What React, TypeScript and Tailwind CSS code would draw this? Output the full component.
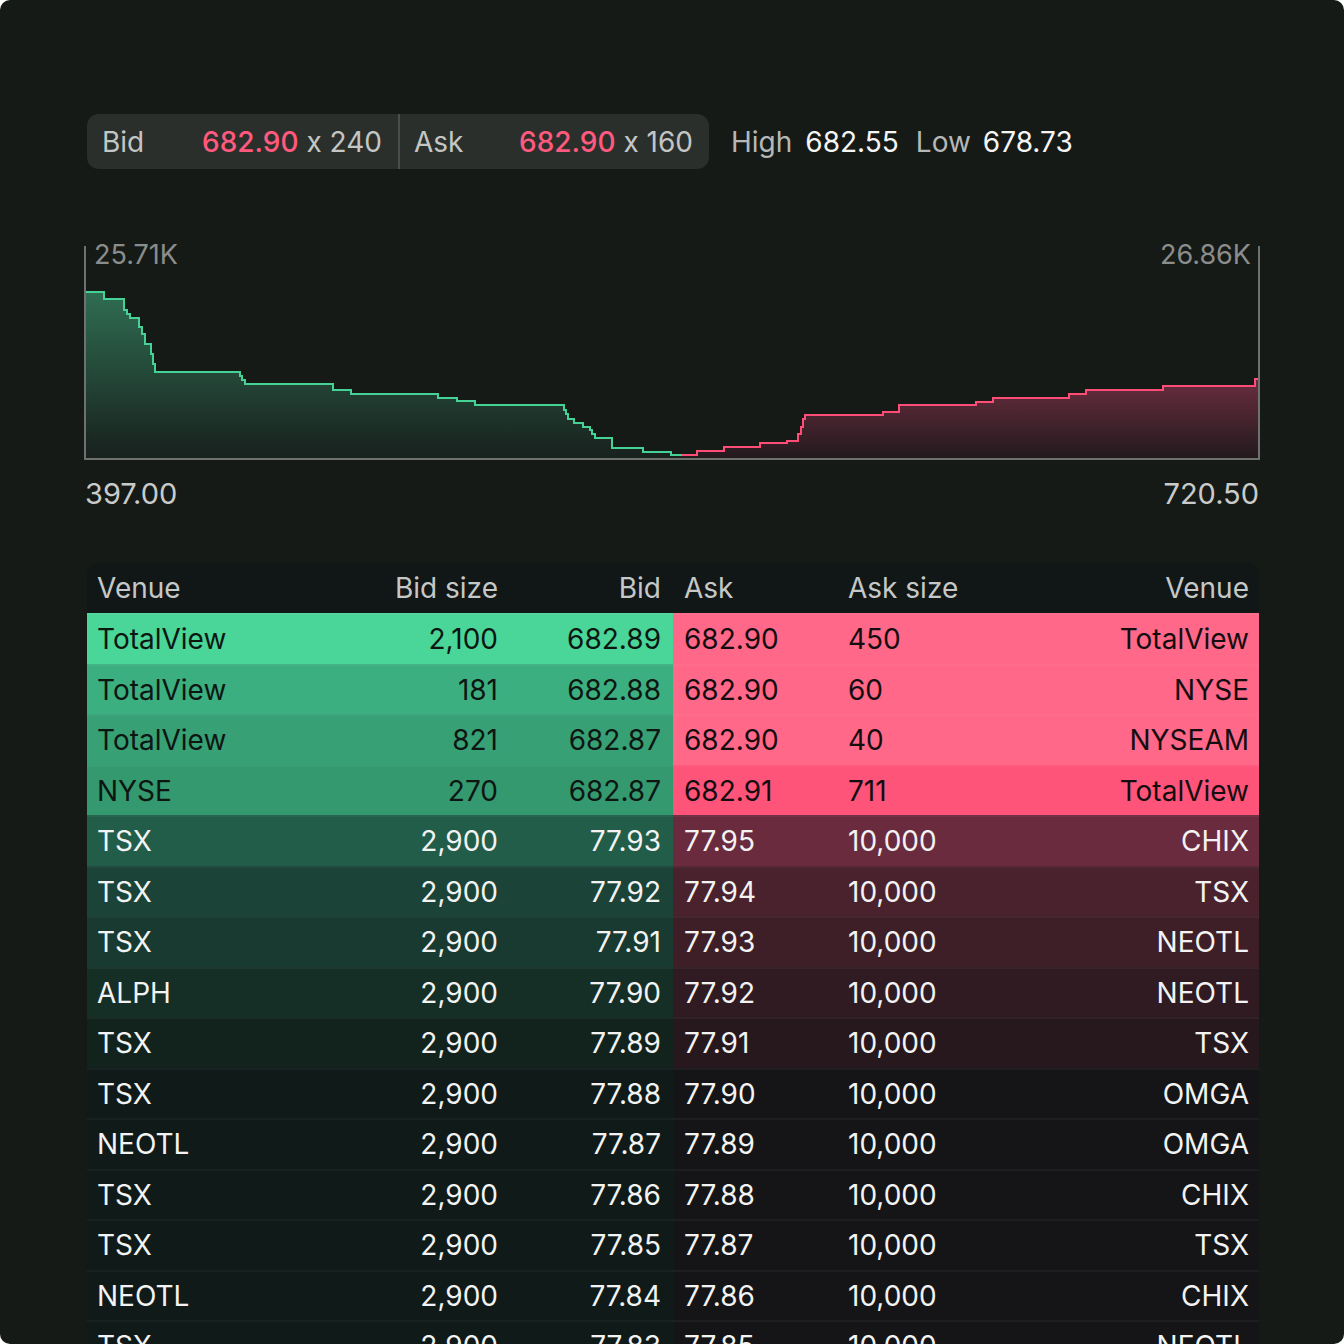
import React from 'react'

// step points in page coordinates (svg viewBox is offset to match)
const BID_PTS: [number, number][] = [
  [85, 292], [104, 292], [104, 299], [124, 299], [124, 310], [127, 310], [127, 314], [130, 314], [130, 318],
  [139, 318], [139, 327], [142, 327], [142, 334], [145, 334], [145, 344], [151, 344], [151, 354], [153, 354],
  [153, 364], [155, 364], [155, 372], [240, 372], [240, 376], [242, 376], [242, 380], [245, 380], [245, 384],
  [333, 384], [333, 390], [351, 390], [351, 394], [438, 394], [438, 398], [457, 398], [457, 401], [475, 401],
  [475, 405], [564, 405], [564, 410], [566, 410], [566, 414], [568, 414], [568, 419], [574, 419], [574, 423],
  [583, 423], [583, 427], [590, 427], [590, 430], [592, 430], [592, 434], [595, 434], [595, 438], [612, 438],
  [612, 448], [643, 448], [643, 452], [671, 452], [671, 455], [682, 455],
]

const ASK_PTS: [number, number][] = [
  [682, 455], [697, 455], [697, 451], [724, 451], [724, 447], [760, 447], [760, 443], [787, 443], [787, 441],
  [798, 441], [798, 434], [801, 434], [801, 427], [803, 427], [803, 419], [805, 419], [805, 415], [883, 415],
  [883, 412], [899, 412], [899, 405], [976, 405], [976, 402], [993, 402], [993, 398], [1069, 398], [1069, 394],
  [1086, 394], [1086, 390], [1163, 390], [1163, 386], [1255, 386], [1255, 379], [1258, 379],
]

const line = (pts: [number, number][]) => pts.map(([x, y], i) => `${i ? 'L' : 'M'}${x} ${y}`).join(' ')
const area = (pts: [number, number][]) =>
  `${line(pts)} L${pts[pts.length - 1][0]} 459 L${pts[0][0]} 459 Z`

const BIDS = [
  { venue: 'TotalView', size: '2,100', price: '682.89', bg: 'bg-[#49d698]', dark: true },
  { venue: 'TotalView', size: '181', price: '682.88', bg: 'bg-[#3caf81]', dark: true },
  { venue: 'TotalView', size: '821', price: '682.87', bg: 'bg-[#37a075]', dark: true },
  { venue: 'NYSE', size: '270', price: '682.87', bg: 'bg-[#34996f]', dark: true },
  { venue: 'TSX', size: '2,900', price: '77.93', bg: 'bg-[#225d49]' },
  { venue: 'TSX', size: '2,900', price: '77.92', bg: 'bg-[#1b4337]' },
  { venue: 'TSX', size: '2,900', price: '77.91', bg: 'bg-[#183a30]' },
  { venue: 'ALPH', size: '2,900', price: '77.90', bg: 'bg-[#152f27]' },
  { venue: 'TSX', size: '2,900', price: '77.89', bg: 'bg-[#12231e]' },
  { venue: 'TSX', size: '2,900', price: '77.88', bg: 'bg-[#0f1a19]' },
  { venue: 'NEOTL', size: '2,900', price: '77.87', bg: 'bg-[#0f1a19]' },
  { venue: 'TSX', size: '2,900', price: '77.86', bg: 'bg-[#0f1a19]' },
  { venue: 'TSX', size: '2,900', price: '77.85', bg: 'bg-[#0f1a19]' },
  { venue: 'NEOTL', size: '2,900', price: '77.84', bg: 'bg-[#0f1a19]' },
  { venue: 'TSX', size: '2,900', price: '77.83', bg: 'bg-[#0f1a19]' },
]

const ASKS = [
  { price: '682.90', size: '450', venue: 'TotalView', bg: 'bg-[#ff6888]', dark: true },
  { price: '682.90', size: '60', venue: 'NYSE', bg: 'bg-[#ff6888]', dark: true },
  { price: '682.90', size: '40', venue: 'NYSEAM', bg: 'bg-[#ff6888]', dark: true },
  { price: '682.91', size: '711', venue: 'TotalView', bg: 'bg-[#ff5479]', dark: true },
  { price: '77.95', size: '10,000', venue: 'CHIX', bg: 'bg-[#6b2b3f]' },
  { price: '77.94', size: '10,000', venue: 'TSX', bg: 'bg-[#4a222e]' },
  { price: '77.93', size: '10,000', venue: 'NEOTL', bg: 'bg-[#3e1f28]' },
  { price: '77.92', size: '10,000', venue: 'NEOTL', bg: 'bg-[#301b22]' },
  { price: '77.91', size: '10,000', venue: 'TSX', bg: 'bg-[#27181e]' },
  { price: '77.90', size: '10,000', venue: 'OMGA', bg: 'bg-[#151517]' },
  { price: '77.89', size: '10,000', venue: 'OMGA', bg: 'bg-[#151517]' },
  { price: '77.88', size: '10,000', venue: 'CHIX', bg: 'bg-[#151517]' },
  { price: '77.87', size: '10,000', venue: 'TSX', bg: 'bg-[#151517]' },
  { price: '77.86', size: '10,000', venue: 'CHIX', bg: 'bg-[#151517]' },
  { price: '77.85', size: '10,000', venue: 'NEOTL', bg: 'bg-[#151517]' },
]

function DepthChart() {
  return (
    <div className="relative ml-[84px] mt-[77px] w-[1176px] h-[214px]">
      <svg width="1176" height="214" viewBox="84 246 1176 214" className="block">
        <defs>
          <linearGradient id="bidFill" x1="0" y1="0" x2="0" y2="1">
            <stop offset="0%" stopColor="#2f6d52" />
            <stop offset="100%" stopColor="#18201d" />
          </linearGradient>
          <linearGradient id="askFill" gradientUnits="userSpaceOnUse" x1="0" y1="379" x2="0" y2="459">
            <stop offset="0%" stopColor="#6a2d3f" />
            <stop offset="100%" stopColor="#221a1d" />
          </linearGradient>
        </defs>
        <path d={area(BID_PTS)} fill="url(#bidFill)" />
        <path d={area(ASK_PTS)} fill="url(#askFill)" />
        <path d={line(BID_PTS)} fill="none" stroke="#44d296" strokeWidth="2" />
        <path d={line(ASK_PTS)} fill="none" stroke="#ff4d77" strokeWidth="2" />
        <path d="M85 246 L85 459 L1259 459 L1259 246" fill="none" stroke="#6e716f" strokeWidth="2" />
      </svg>
      <span className="absolute left-[10px] top-[-5px] text-[27px] leading-[28px] text-[#8a8d8b]">25.71K</span>
      <span className="absolute right-[9px] top-[-5px] text-[27px] leading-[28px] text-[#8a8d8b]">26.86K</span>
    </div>
  )
}

export default function App() {
  return (
    <div className="min-h-screen bg-white">
      <div
        className="w-[1344px] h-[1344px] overflow-hidden rounded-[10px] bg-[#161a17] text-[#f2f3f2]"
        style={{ fontFamily: 'Inter, "Noto Sans", sans-serif' }}
      >
        {/* Quote bar */}
        <div className="flex items-center pt-[114px] pl-[87px] text-[28px] leading-none">
          <div className="flex h-[55px] items-center rounded-[12px] bg-[#2b2f2c]">
            <div className="flex w-[311px] items-center justify-between pl-[15px] pr-[16px]">
              <span className="text-[#c3c6c4]">Bid</span>
              <span>
                <span className="font-medium text-[#ff5a7e]">682.90</span>
                <span className="text-[#c3c6c4]"> x 240</span>
              </span>
            </div>
            <div className="h-full w-[2px] bg-[#4a4e4b]" />
            <div className="flex w-[309px] items-center justify-between pl-[14px] pr-[16px]">
              <span className="text-[#c3c6c4]">Ask</span>
              <span>
                <span className="font-medium text-[#ff5a7e]">682.90</span>
                <span className="text-[#c3c6c4]"> x 160</span>
              </span>
            </div>
          </div>
          <div className="ml-[22px] flex items-center">
            <span className="text-[#b5b8b6]">High</span>
            <span className="ml-[13px] text-[#f4f5f4]">682.55</span>
            <span className="ml-[17px] text-[#b5b8b6]">Low</span>
            <span className="ml-[12px] text-[#f4f5f4]">678.73</span>
          </div>
        </div>

        <DepthChart />

        <div className="ml-[85px] mt-[20px] flex w-[1174px] justify-between text-[29px] leading-[28px] text-[#c9cbca]">
          <span>397.00</span>
          <span>720.50</span>
        </div>

        {/* Order book */}
        <div className="ml-[87px] mt-[55px] w-[1172px] overflow-hidden rounded-t-[12px] text-[28px] leading-none">
          <div className="flex h-[50px] items-center bg-[#111617] text-[#c5c8c6]">
            <div className="flex w-[586px] items-center pl-[10px] pr-[12px]">
              <span className="flex-1">Venue</span>
              <span className="w-[140px] text-right">Bid size</span>
              <span className="w-[163px] text-right">Bid</span>
            </div>
            <div className="flex w-[586px] items-center pl-[11px] pr-[10px]">
              <span className="w-[164px]">Ask</span>
              <span className="w-[150px]">Ask size</span>
              <span className="flex-1 text-right">Venue</span>
            </div>
          </div>
          {BIDS.map((b, i) => {
            const a = ASKS[i]
            return (
              <div key={i} className="flex h-[50.5px]">
                <div
                  className={`flex w-[586px] items-center border-t-2 border-[#ffffff0a] pl-[10px] pr-[12px] ${b.bg} ${b.dark ? 'text-[#0e1612]' : 'text-[#f2f3f2]'}`}
                >
                  <span className="flex-1">{b.venue}</span>
                  <span className="w-[140px] text-right">{b.size}</span>
                  <span className="w-[163px] text-right">{b.price}</span>
                </div>
                <div
                  className={`flex w-[586px] items-center border-t-2 border-[#ffffff0a] pl-[11px] pr-[10px] ${a.bg} ${a.dark ? 'text-[#140d10]' : 'text-[#f2f3f2]'}`}
                >
                  <span className="w-[164px]">{a.price}</span>
                  <span className="w-[150px]">{a.size}</span>
                  <span className="flex-1 text-right">{a.venue}</span>
                </div>
              </div>
            )
          })}
        </div>
      </div>
    </div>
  )
}
